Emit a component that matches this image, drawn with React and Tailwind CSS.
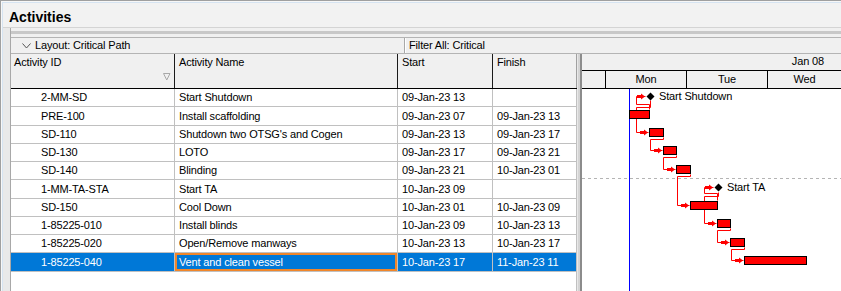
import React from 'react';

const rows = [
  { id: '2-MM-SD', name: 'Start Shutdown', start: '09-Jan-23 13', finish: '' },
  { id: 'PRE-100', name: 'Install scaffolding', start: '09-Jan-23 07', finish: '09-Jan-23 13' },
  { id: 'SD-110', name: "Shutdown two OTSG's and Cogen", start: '09-Jan-23 13', finish: '09-Jan-23 17' },
  { id: 'SD-130', name: 'LOTO', start: '09-Jan-23 17', finish: '09-Jan-23 21' },
  { id: 'SD-140', name: 'Blinding', start: '09-Jan-23 21', finish: '10-Jan-23 01' },
  { id: '1-MM-TA-STA', name: 'Start TA', start: '10-Jan-23 09', finish: '' },
  { id: 'SD-150', name: 'Cool Down', start: '10-Jan-23 01', finish: '10-Jan-23 09' },
  { id: '1-85225-010', name: 'Install blinds', start: '10-Jan-23 09', finish: '10-Jan-23 13' },
  { id: '1-85225-020', name: 'Open/Remove manways', start: '10-Jan-23 13', finish: '10-Jan-23 17' },
  { id: '1-85225-040', name: 'Vent and clean vessel', start: '10-Jan-23 17', finish: '11-Jan-23 11', selected: true },
];

// gantt geometry, page pixel coords
const ROW = 18.25;
const rowTop = (i) => Math.floor(89 + ROW * i);
const barTop = (i) => rowTop(i) + 3;

const bars = [
  { r: 1, x1: 629, x2: 649 },
  { r: 2, x1: 649, x2: 663 },
  { r: 3, x1: 663, x2: 676 },
  { r: 4, x1: 676, x2: 690 },
  { r: 6, x1: 690, x2: 717 },
  { r: 7, x1: 717, x2: 730 },
  { r: 8, x1: 730, x2: 744 },
  { r: 9, x1: 744, x2: 806 },
];

const milestones = [
  { r: 0, x: 650, label: 'Start Shutdown' },
  { r: 5, x: 718, label: 'Start TA' },
];

const links = [
  [[649, 109], [649, 104], [636, 104], [636, 96], [645, 96]],
  [[650, 100], [650, 107], [636, 107], [636, 132], [648, 132]],
  [[663, 137], [663, 139], [650, 139], [650, 150], [662, 150]],
  [[676, 155], [676, 157], [663, 157], [663, 169], [675, 169]],
  [[690, 174], [690, 176], [677, 176], [677, 205], [689, 205]],
  [[717, 200], [717, 193], [704, 193], [704, 187], [713, 187]],
  [[718, 192], [718, 196], [704, 196], [704, 223], [716, 223]],
  [[730, 228], [730, 230], [717, 230], [717, 242], [729, 242]],
  [[744, 247], [744, 249], [731, 249], [731, 260], [743, 260]],
];

function Arrow({ tx, py }) {
  const pts = [
    [tx - 8, py - 1],
    [tx - 4, py - 1],
    [tx - 4, py - 2.5],
    [tx, py + 0.5],
    [tx - 4, py + 3.5],
    [tx - 4, py + 2],
    [tx - 8, py + 2],
  ];
  return <polygon points={pts.map((p) => p.join(',')).join(' ')} fill="#ff0000" />;
}

function GanttChart() {
  return (
    <svg width="259" height="202" viewBox="582 89 259 202" className="block">
      <line x1="582" y1="178.5" x2="841" y2="178.5" stroke="#b4b4b4" strokeDasharray="3 3" />
      <line x1="629.5" y1="89" x2="629.5" y2="291" stroke="#0000ff" />
      {links.map((pts, i) => {
        const last = pts[pts.length - 1];
        return (
          <g key={i}>
            <polyline
              points={pts.map(([x, y]) => `${x + 0.5},${y + 0.5}`).join(' ')}
              fill="none"
              stroke="#ff0000"
              strokeWidth="1"
            />
            <Arrow tx={last[0]} py={last[1]} />
          </g>
        );
      })}
      {bars.map((b, i) => (
        <rect
          key={i}
          x={b.x1 + 0.5}
          y={barTop(b.r) + 0.5}
          width={b.x2 - b.x1}
          height="8"
          fill="#ff0000"
          stroke="#000"
          strokeWidth="1"
        />
      ))}
      {milestones.map((m, i) => {
        const cy = barTop(m.r) + 4.5;
        const cx = m.x + 0.5;
        return (
          <g key={i}>
            <polygon points={`${cx - 4},${cy} ${cx},${cy - 4} ${cx + 4},${cy} ${cx},${cy + 4}`} fill="#000" />
            <text
              x={m.x + 9}
              y={cy + 3.5}
              fontSize="11"
              fontFamily="'Liberation Sans', Arial, sans-serif"
              letterSpacing="-0.15"
              fill="#000"
            >
              {m.label}
            </text>
          </g>
        );
      })}
    </svg>
  );
}

export default function App() {
  return (
    <div className="w-[841px] h-[291px] overflow-hidden border-t border-l border-[#a0a0a0] bg-[#f7f7f7] pl-[1px] pt-[1px] font-['Liberation_Sans',Arial,sans-serif] text-[11px] tracking-[-0.15px] text-black">
      <div className="flex flex-col h-full border-t border-l border-[#d6e4f2] bg-[#f2f2f2]">
        {/* Title */}
        <div className="h-[24px] shrink-0 pl-[6px] pt-[6px] text-[14px] leading-[16px] font-bold tracking-normal">
          Activities
        </div>
        <div className="h-px shrink-0 bg-[#d4d4d4]" />

        <div className="flex flex-1 min-h-0">
          {/* left gutter */}
          <div className="w-[8px] shrink-0 bg-[#e9e9e9] border-r border-[#a8a8a8]" />

          <div className="flex flex-col flex-1 min-w-0 bg-[#f0f0f0]">
            <div className="h-[3px] shrink-0" />
            <div className="h-[3px] shrink-0 bg-[#c8c8c8]" />
            <div className="h-[3px] shrink-0" />

            {/* layout / filter bar */}
            <div className="flex h-[17px] shrink-0 border-y border-[#b4b4b4] bg-[#f0f0f0]">
              <div className="flex items-center w-[394px] shrink-0 border-r border-[#a8a8a8] pl-[11px] gap-[4px]">
                <svg width="9" height="6" viewBox="0 0 9 6">
                  <polyline points="0.5,0.5 4.5,5 8.5,0.5" fill="none" stroke="#555" strokeWidth="1" />
                </svg>
                <span>Layout: Critical Path</span>
              </div>
              <div className="flex items-center flex-1 border-l border-white pl-[3px]">Filter All: Critical</div>
            </div>

            {/* column headers */}
            <div className="flex h-[35px] shrink-0">
              <div className="flex w-[566px] shrink-0 border-b border-black bg-[#f0f0f0]">
                <div className="relative w-[164px] shrink-0 border-r border-[#1a1a1a] pl-[3px] pt-[2px] leading-[13px]">
                  Activity ID
                  <svg width="8" height="8" viewBox="0 0 8 8" className="absolute right-[3px] top-[19px]">
                    <polygon points="0.5,0.5 7,0.5 3.75,7" fill="none" stroke="#a8a8a8" strokeWidth="1" />
                  </svg>
                </div>
                <div className="w-[223px] shrink-0 border-r border-[#1a1a1a] pl-[4px] pt-[2px] leading-[13px]">Activity Name</div>
                <div className="w-[95px] shrink-0 border-r border-[#1a1a1a] pl-[4px] pt-[2px] leading-[13px]">Start</div>
                <div className="flex-1 border-r border-[#a0a0a0] pl-[4px] pt-[2px] leading-[13px]">Finish</div>
              </div>
              <div className="w-[5px] shrink-0 bg-[#d4d4d4] border-l border-[#e8e8e8] border-r-2 border-r-[#8c8c8c]" />
              <div className="flex flex-col flex-1 bg-[#f0f0f0]">
                <div className="flex items-center justify-end h-[17px] border-b border-black pr-[17px] pb-[1px]">Jan 08</div>
                <div className="flex h-[18px] border-b border-black">
                  <div className="w-[24px] shrink-0 border-r border-black" />
                  <div className="flex items-center justify-center w-[81px] shrink-0 border-r border-black">Mon</div>
                  <div className="flex items-center justify-center w-[81px] shrink-0 border-r border-black">Tue</div>
                  <div className="flex items-center justify-center flex-1">Wed</div>
                </div>
              </div>
            </div>

            {/* body */}
            <div className="flex flex-1 min-h-0">
              <div className="w-[566px] shrink-0 bg-white border-r border-[#c0c0c0]">
                {rows.map((r) => (
                  <div
                    key={r.id}
                    className={
                      r.selected
                        ? 'flex h-[18.25px] border-b border-[#c0c0c0] bg-[#0078d7] text-white'
                        : 'flex h-[18.25px] border-b border-[#c0c0c0]'
                    }
                  >
                    <div className="flex items-center w-[164px] shrink-0 border-r border-[#c0c0c0] pl-[30px] whitespace-nowrap">{r.id}</div>
                    <div
                      className={
                        r.selected
                          ? 'flex items-center w-[223px] shrink-0 border-r border-[#c0c0c0] pl-[4px] whitespace-nowrap shadow-[inset_0_0_0_2px_#f0862a]'
                          : 'flex items-center w-[223px] shrink-0 border-r border-[#c0c0c0] pl-[4px] whitespace-nowrap'
                      }
                    >
                      {r.name}
                    </div>
                    <div className="flex items-center w-[95px] shrink-0 border-r border-[#c0c0c0] pl-[4px] whitespace-nowrap">{r.start}</div>
                    <div className="flex items-center flex-1 pl-[4px] whitespace-nowrap">{r.finish}</div>
                  </div>
                ))}
              </div>
              <div className="w-[5px] shrink-0 bg-[#d4d4d4] border-l border-[#e8e8e8] border-r-2 border-r-[#8c8c8c]" />
              <div className="flex-1 bg-white overflow-hidden">
                <GanttChart />
              </div>
            </div>
          </div>
        </div>
      </div>
    </div>
  );
}
